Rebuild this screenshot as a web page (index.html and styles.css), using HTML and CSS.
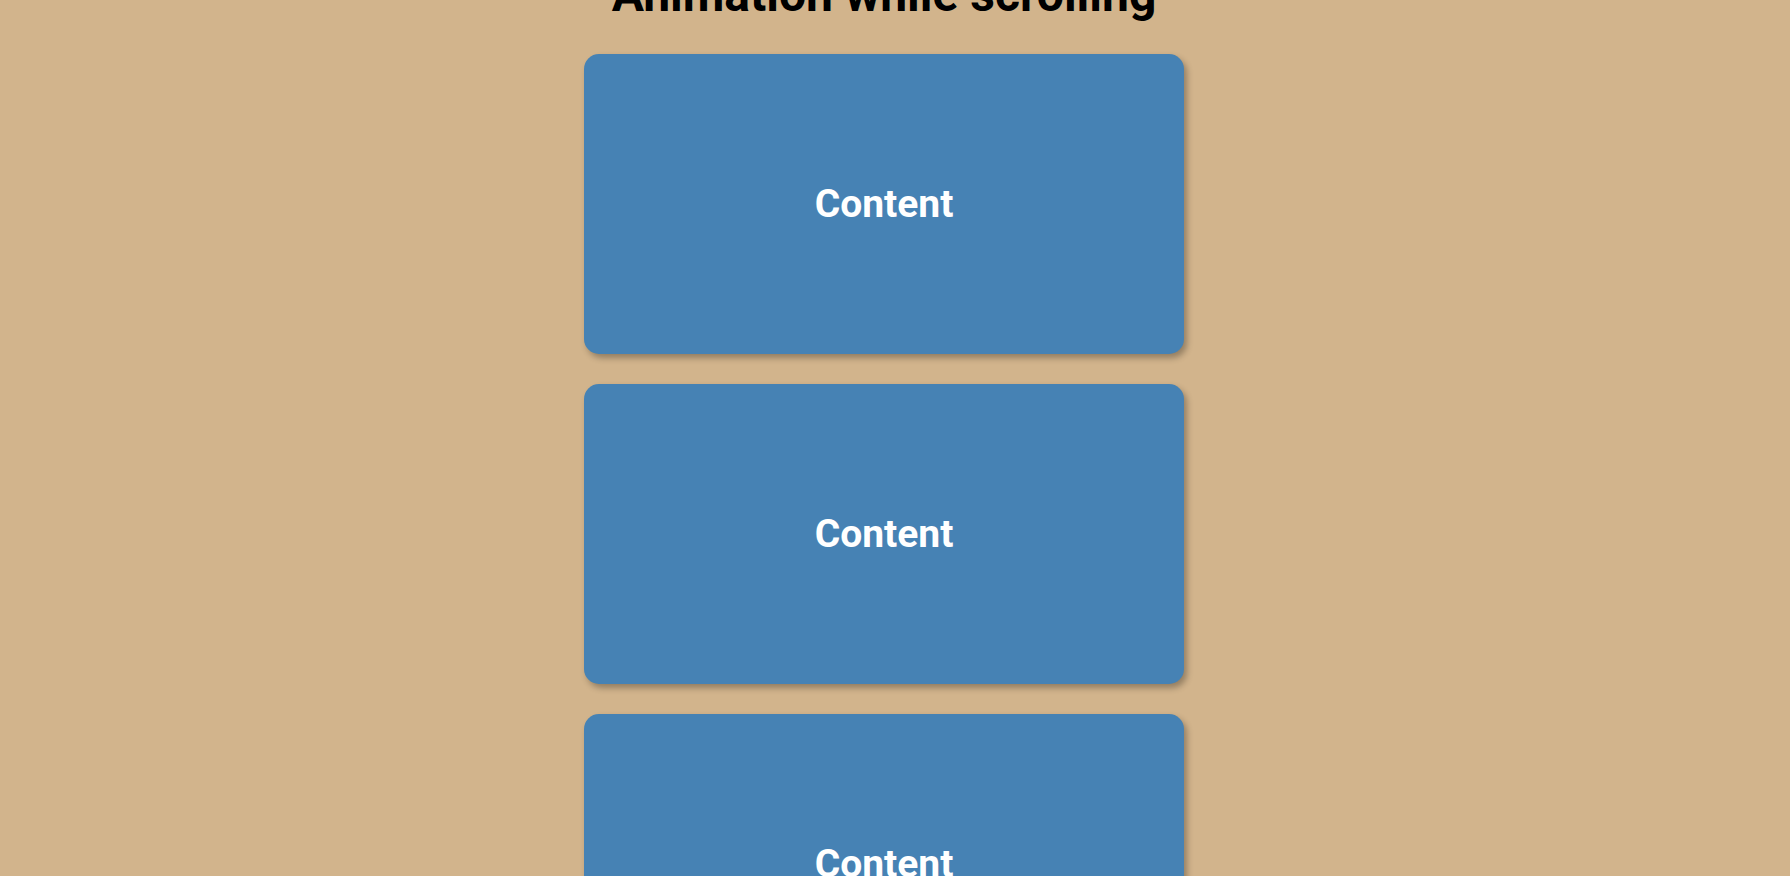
FILE: index.html
```html
<!DOCTYPE html>
<html lang="en">
<head>
    <meta charset="UTF-8">
    <meta name="viewport" content="width=device-width, initial-scale=1.0">
    <title>Animation while scrolling</title>
    <link rel="stylesheet" href="styles.css">
</head>
<body>

    <div class="page">
        <h1>Animation while scrolling</h1>
        <div class="box"><h2>Content</h2></div>
        <div class="box"><h2>Content</h2></div>
        <div class="box"><h2>Content</h2></div>
        <div class="box"><h2>Content</h2></div>
        <div class="box"><h2>Content</h2></div>
    </div>

</body>
</html>
```

FILE: styles.css
```css
body {
    font-family: Roboto, "Liberation Sans", sans-serif;
    margin: 0;
    background-color: tan;
    overflow: hidden;
}

.page {
    display: flex;
    flex-direction: column;
    align-items: center;
    margin-top: -34px;
    padding-right: 22px;
}

h1 {
    font-size: 48px;
    margin: 0 0 16px;
}

.box {
    background-color: steelblue;
    color: #fff;
    display: flex;
    align-items: center;
    justify-content: center;
    width: 600px;
    height: 300px;
    margin: 15px 0;
    border-radius: 15px;
    box-shadow: 3px 4px 6px rgba(0, 0, 0, 0.3);
}

.box h2 {
    font-size: 39px;
    margin: 0;
}
```
